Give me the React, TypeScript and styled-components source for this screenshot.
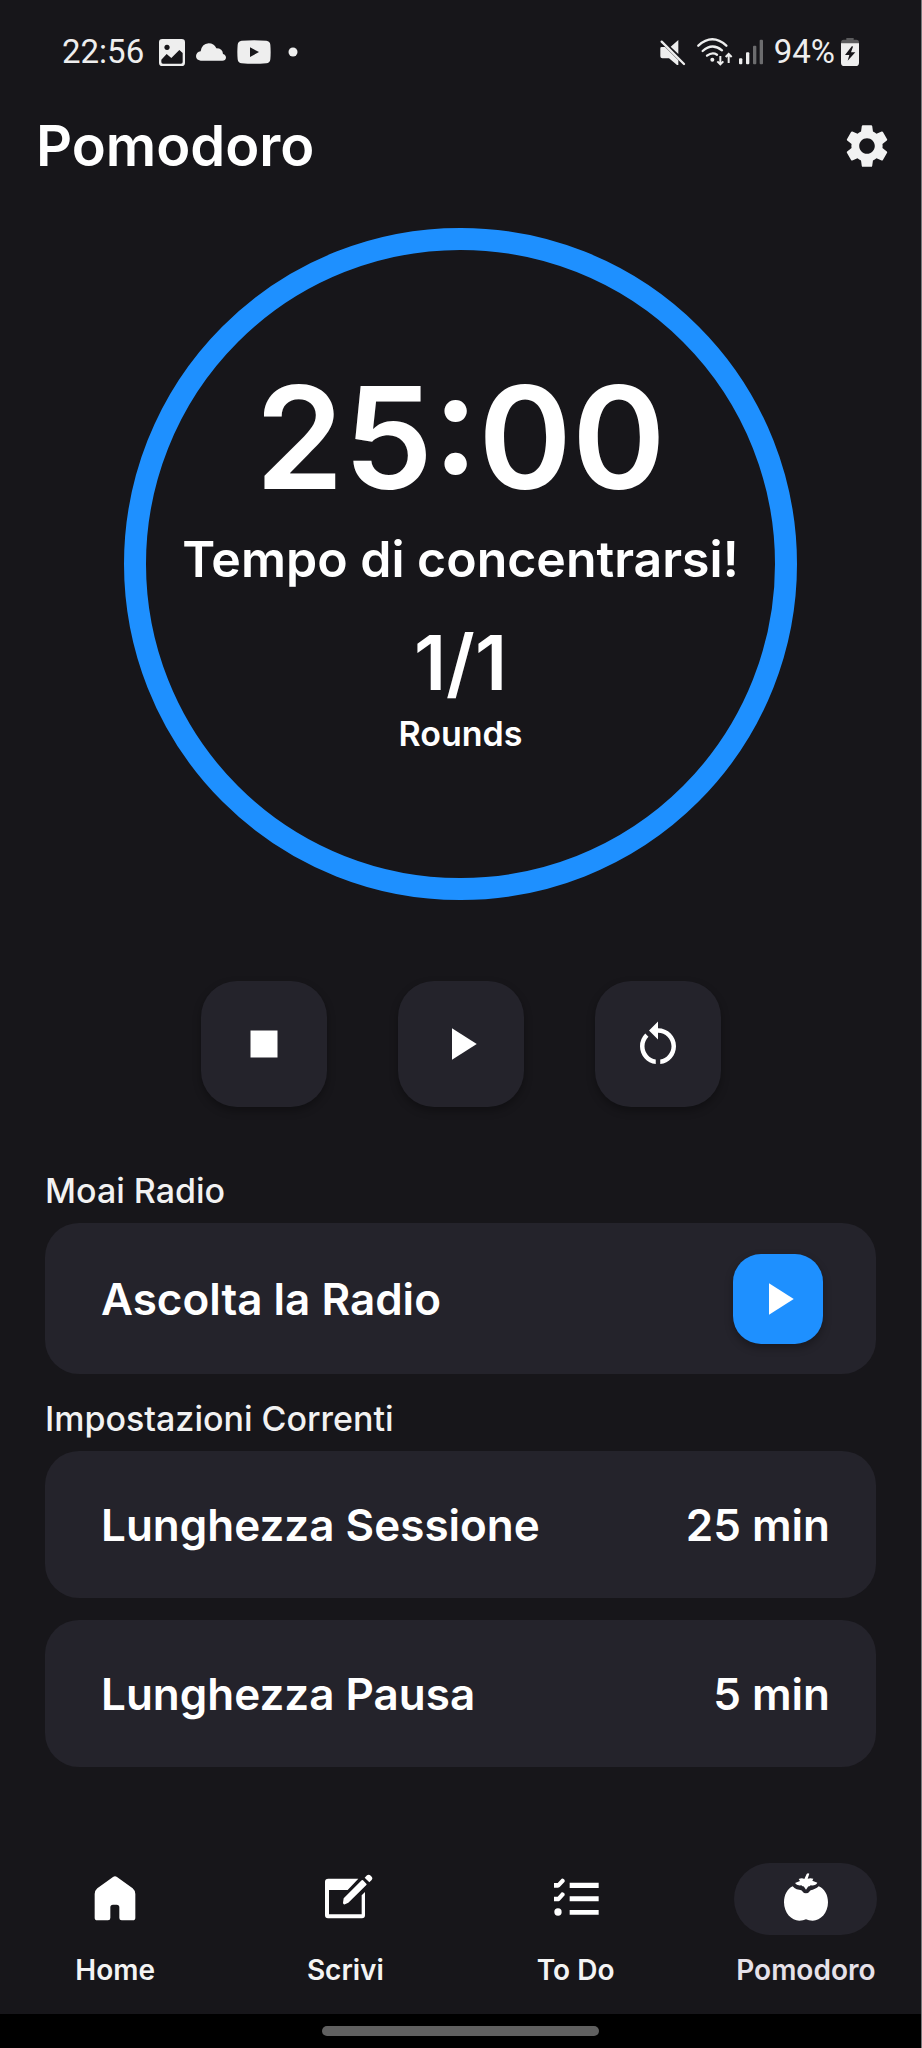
import React from 'react';
import styled, { createGlobalStyle } from 'styled-components';
import { MdSettings } from 'react-icons/md';

const color = {
  background: '#17161a',
  surface: '#24232b',
  accent: '#1e90ff',
  text: '#ffffff',
  status: '#eeeeee',
};

const GlobalStyle = createGlobalStyle`
  *, *::before, *::after { box-sizing: border-box; }
  body {
    margin: 0;
    background: ${color.background};
    color: ${color.text};
    font-family: Inter, "Liberation Sans", sans-serif;
    font-weight: 600;
  }
  h1, h2, p, dl, dt, dd { margin: 0; padding: 0; font-weight: inherit; }
`;

const Screen = styled.div`
  display: flex;
  flex-direction: column;
  min-height: 100vh;
  border-right: 1px solid #78787a;
`;

const StatusBar = styled.div`
  display: flex;
  align-items: center;
  justify-content: space-between;
  height: 104px;
  padding: 0 62px;
  color: ${color.status};
  font: 400 33px/40px Roboto, sans-serif;
`;

const StatusGroup = styled.div<{ $gap: number }>`
  display: flex;
  align-items: center;
  gap: ${({ $gap }) => $gap}px;

  svg { display: block; flex: none; }
`;

const Clock = styled.span`
  padding-right: 4px;
`;

const Header = styled.header`
  display: flex;
  align-items: center;
  justify-content: space-between;
  height: 84px;
  padding: 0 28px 0 36px;
`;

const Title = styled.h1`
  font-size: 56px;
  line-height: 64px;
`;

const IconButton = styled.button`
  display: grid;
  place-items: center;
  padding: 0;
  border: 0;
  background: none;
  color: #f2f2f2;
`;

const Main = styled.main`
  display: flex;
  flex-direction: column;
  flex: 1;
`;

const TimerRing = styled.section`
  display: flex;
  flex-direction: column;
  align-items: center;
  justify-content: center;
  align-self: center;
  width: 73%;
  aspect-ratio: 1;
  margin-top: 40px;
  padding-bottom: 8px;
  border: 22px solid ${color.accent};
  border-radius: 50%;
  text-align: center;
`;

const Time = styled.p`
  font-size: 142px;
  line-height: 140px;
`;

const Phase = styled.p`
  margin-top: 24px;
  font-size: 50px;
  line-height: 56px;
`;

const RoundCount = styled.p`
  margin-top: 35px;
  font-size: 76px;
  line-height: 80px;
`;

const RoundLabel = styled.p`
  margin-top: 12px;
  font-size: 34px;
  line-height: 40px;
`;

const Controls = styled.div`
  display: flex;
  justify-content: center;
  gap: 71px;
  margin-top: 81px;
`;

const SquareButton = styled.button<{ $size: number; $accent?: boolean }>`
  display: grid;
  place-items: center;
  width: ${({ $size }) => $size}px;
  height: ${({ $size }) => $size}px;
  padding: 0;
  border: 0;
  border-radius: ${({ $accent }) => ($accent ? 28 : 36)}px;
  background: ${({ $accent }) => ($accent ? color.accent : color.surface)};
  color: ${color.text};
  box-shadow: 0 4px 8px rgba(0, 0, 0, 0.3);
`;

const Section = styled.section`
  padding: 0 45px;
`;

const SectionTitle = styled.h2<{ $space: number }>`
  margin: ${({ $space }) => $space}px 0 13px;
  color: #f2f2f2;
  font-size: 34px;
  line-height: 38px;
  font-weight: 500;
`;

const CardList = styled.div`
  display: flex;
  flex-direction: column;
  gap: 22px;
`;

const Card = styled.div<{ $tall?: boolean }>`
  display: flex;
  align-items: center;
  justify-content: space-between;
  min-height: ${({ $tall }) => ($tall ? 151 : 147)}px;
  padding: 0 ${({ $tall }) => ($tall ? 53 : 46)}px 0 56px;
  border-radius: 34px;
  background: ${color.surface};
  font-size: 44px;
  line-height: 52px;
`;

const Nav = styled.nav`
  display: grid;
  grid-template-columns: repeat(4, 1fr);
  padding: 24px 0 25px;
`;

const NavLink = styled.a<{ $active?: boolean }>`
  display: flex;
  flex-direction: column;
  align-items: center;
  gap: 16px;
  color: ${({ $active }) => ($active ? '#e6e1e9' : '#f4f4f4')};
  font-size: 28px;
  line-height: 38px;
  text-decoration: none;
`;

const NavPill = styled.span<{ $active?: boolean }>`
  display: grid;
  place-items: center;
  width: 143px;
  height: 72px;
  border-radius: 36px;
  background: ${({ $active }) => ($active ? color.surface : 'transparent')};
  color: ${color.text};
`;

const GestureBar = styled.div`
  display: flex;
  align-items: center;
  justify-content: center;
  height: 34px;
  background: #000;
`;

const GestureHandle = styled.span`
  width: 30%;
  height: 10px;
  border-radius: 5px;
  background: #606060;
`;

const PictureIcon = () => (
  <svg width="26" height="27" viewBox="0 0 78 81">
    <path
      fill="currentColor"
      fillRule="evenodd"
      d="M10 0H68Q78 0 78 10V71Q78 81 68 81H10Q0 81 0 71V10Q0 0 10 0ZM24 17A8 8 0 1 0 24.100 17ZM7 62V69Q7 74 12 74H66Q71 74 71 69V42L61 33L37 57L23 45Z"
    />
  </svg>
);

const CloudIcon = () => (
  <svg width="30" height="18" viewBox="0 0 90 52">
    <path
      fill="currentColor"
      d="M14 52Q0 50 0 38Q1 26 14 24Q17 2 38 0Q54 0 61 15Q80 15 81 32Q90 35 90 43Q89 52 79 52Z"
    />
  </svg>
);

const VideoIcon = () => (
  <svg width="34" height="24" viewBox="0 0 102 72">
    <path
      fill="currentColor"
      fillRule="evenodd"
      d="M14 2Q51 -1 88 2Q99 3 100 14Q102 36 100 58Q99 69 88 70Q51 73 14 70Q3 69 2 58Q0 36 2 14Q3 3 14 2ZM39 22V51L66 36Z"
    />
  </svg>
);

const DotIcon = () => (
  <svg width="22" height="10" viewBox="0 0 22 10">
    <circle cx="11" cy="5" r="4.500" fill="currentColor" />
  </svg>
);

const MuteIcon = () => (
  <svg width="32" height="27" viewBox="0 0 96 81">
    <path fill="currentColor" d="M58 3V45L35 23ZM4 28Q4 24 8 24H18L58 64V78H54L30 58H10Q4 58 4 52Z" />
    <path stroke="currentColor" strokeWidth="7" strokeLinecap="round" d="M8 8L75 75" />
  </svg>
);

const WifiIcon = () => (
  <svg width="36" height="28" viewBox="0 0 108 84">
    <g fill="none" stroke="currentColor" strokeWidth="7" strokeLinecap="round">
      <path d="M4 23Q46 -15 88 23" />
      <path d="M17 39Q46 13 75 37" />
      <path d="M30 53Q46 41 60 50" />
    </g>
    <circle cx="46" cy="65" r="6" fill="currentColor" />
    <g fill="none" stroke="currentColor" strokeWidth="6">
      <path d="M70 54V79M61 70L70 79L79 70" />
      <path d="M95 75V48M86 57L95 48L104 57" />
    </g>
  </svg>
);

const SignalIcon = () => (
  <svg width="29" height="26" viewBox="0 0 87 78">
    <g fill="currentColor">
      <rect x="0" y="58" width="10" height="18" rx="3" />
      <rect x="21" y="40" width="10" height="36" rx="3" />
      <rect x="42" y="20" width="10" height="56" rx="3" opacity=".4" />
      <rect x="62" y="2" width="10" height="74" rx="3" opacity=".4" />
    </g>
  </svg>
);

const BatteryIcon = () => (
  <svg width="18" height="28" viewBox="0 0 54 84">
    <path fill="#5c5c5e" d="M16 0H38V5H46Q54 5 54 14V20H0V14Q0 5 8 5H16Z" />
    <path
      fill="currentColor"
      fillRule="evenodd"
      d="M0 16H54V74Q54 84 44 84H10Q0 84 0 74ZM33 24L12 51H25L20 68L43 43H30L36 26Z"
    />
  </svg>
);

const StopIcon = () => (
  <svg width="54" height="54" viewBox="0 0 24 24" fill="currentColor">
    <path d="M6 6H18V18H6Z" />
  </svg>
);

const PlayIcon = () => (
  <svg width="54" height="54" viewBox="0 0 24 24" fill="currentColor">
    <path d="M8 5V19L19 12Z" />
  </svg>
);

const RestartIcon = () => (
  <svg width="54" height="54" viewBox="0 0 24 24" fill="currentColor">
    <path d="M6 13c0-1.650.670-3.150 1.760-4.240L6.340 7.340A8 8 0 0 0 4 13c0 4.080 3.050 7.440 7 7.930v-2.020C8.170 18.430 6 15.970 6 13Z" />
    <path d="M20 13c0-4.420-3.580-8-8-8V2L8 6l4 4V7c3.310 0 6 2.690 6 6 0 2.970-2.170 5.430-5 5.910v2.020c3.950-.490 7-3.850 7-7.930Z" />
  </svg>
);

const NavIcon = ({ children }: { children: React.ReactNode }) => (
  <svg width="56" height="56" viewBox="0 0 168 168" fill="currentColor">
    {children}
  </svg>
);

const HomeIcon = () => (
  <NavIcon>
    <path d="M78 18Q84 13 90 18L137 52Q145 59 145 69V140Q145 148 137 148H104Q97 148 97 141V109Q97 101 89 101H78Q70 101 70 109V141Q70 148 63 148H31Q23 148 23 140V69Q23 59 31 52Z" />
  </NavIcon>
);

const WriteIcon = () => (
  <NavIcon>
    <path d="M34 23H124L92 57H36V130H134V73L144 63V133Q144 142 135 142H33Q24 142 24 133V32Q24 23 34 23Z" />
    <path d="M80 82L134 28Q136 26 138 28L148 38Q150 40 148 42L94 95L84 100Q78 101 78 95Z" />
    <path d="M143 20L150 13Q156 9 162 15Q169 21 164 27L157 34Z" />
  </NavIcon>
);

const ListIcon = () => (
  <NavIcon>
    <path d="M65 35H152V51H65ZM65 76H152V91H65ZM65 117H152V131H65Z" />
    <path d="M18 36H29L41 23Q46 21 50 27V32L35 48Q32 50 29 50H18ZM18 77H29L41 64Q46 62 50 68V73L35 89Q32 91 29 91H18Z" />
    <circle cx="30" cy="123" r="11" />
  </NavIcon>
);

const TomatoIcon = () => (
  <NavIcon>
    <path d="M44 46C50 54 62 57 70 58Q76 67 84 67Q92 67 98 58C106 56 116 53 122 46C140 53 150 72 150 94C150 126 128 149 104 149Q92 149 84 145Q76 149 64 149C40 149 18 126 18 94C18 72 28 53 44 46Z" />
    <path d="M79 24L86 9Q89 5 94 8L89 23Q97 20 106 23L103 29L118 35Q113 45 98 43Q95 47 91 46L84 56L77 46Q73 47 70 43Q56 45 51 36L66 30L62 24Q72 20 79 24Z" />
  </NavIcon>
);

const navItems = [
  { label: 'Home', Icon: HomeIcon },
  { label: 'Scrivi', Icon: WriteIcon },
  { label: 'To Do', Icon: ListIcon },
  { label: 'Pomodoro', Icon: TomatoIcon, active: true },
];

const settings = [
  { name: 'Lunghezza Sessione', value: '25 min' },
  { name: 'Lunghezza Pausa', value: '5 min' },
];

export default function App() {
  return (
    <>
      <GlobalStyle />
      <Screen>
        <StatusBar>
          <StatusGroup $gap={11}>
            <Clock>22:56</Clock>
            <PictureIcon />
            <CloudIcon />
            <VideoIcon />
            <DotIcon />
          </StatusGroup>
          <StatusGroup $gap={6}>
            <MuteIcon />
            <WifiIcon />
            <SignalIcon />
            <span>94%</span>
            <BatteryIcon />
          </StatusGroup>
        </StatusBar>

        <Header>
          <Title>Pomodoro</Title>
          <IconButton aria-label="Impostazioni">
            <MdSettings size={52} />
          </IconButton>
        </Header>

        <Main>
          <TimerRing>
            <Time>25:00</Time>
            <Phase>Tempo di concentrarsi!</Phase>
            <RoundCount>1/1</RoundCount>
            <RoundLabel>Rounds</RoundLabel>
          </TimerRing>

          <Controls>
            <SquareButton $size={126} aria-label="Ferma"><StopIcon /></SquareButton>
            <SquareButton $size={126} aria-label="Avvia"><PlayIcon /></SquareButton>
            <SquareButton $size={126} aria-label="Ricomincia"><RestartIcon /></SquareButton>
          </Controls>

          <Section>
            <SectionTitle $space={65}>Moai Radio</SectionTitle>
            <Card $tall>
              <span>Ascolta la Radio</span>
              <SquareButton $size={90} $accent aria-label="Ascolta"><PlayIcon /></SquareButton>
            </Card>
          </Section>

          <Section>
            <SectionTitle $space={26}>Impostazioni Correnti</SectionTitle>
            <CardList as="dl">
              {settings.map(({ name, value }) => (
                <Card key={name}>
                  <dt>{name}</dt>
                  <dd>{value}</dd>
                </Card>
              ))}
            </CardList>
          </Section>
        </Main>

        <Nav>
          {navItems.map(({ label, Icon, active }) => (
            <NavLink key={label} href="#" $active={active} aria-current={active ? 'page' : undefined}>
              <NavPill $active={active}><Icon /></NavPill>
              {label}
            </NavLink>
          ))}
        </Nav>
        <GestureBar><GestureHandle /></GestureBar>
      </Screen>
    </>
  );
}
